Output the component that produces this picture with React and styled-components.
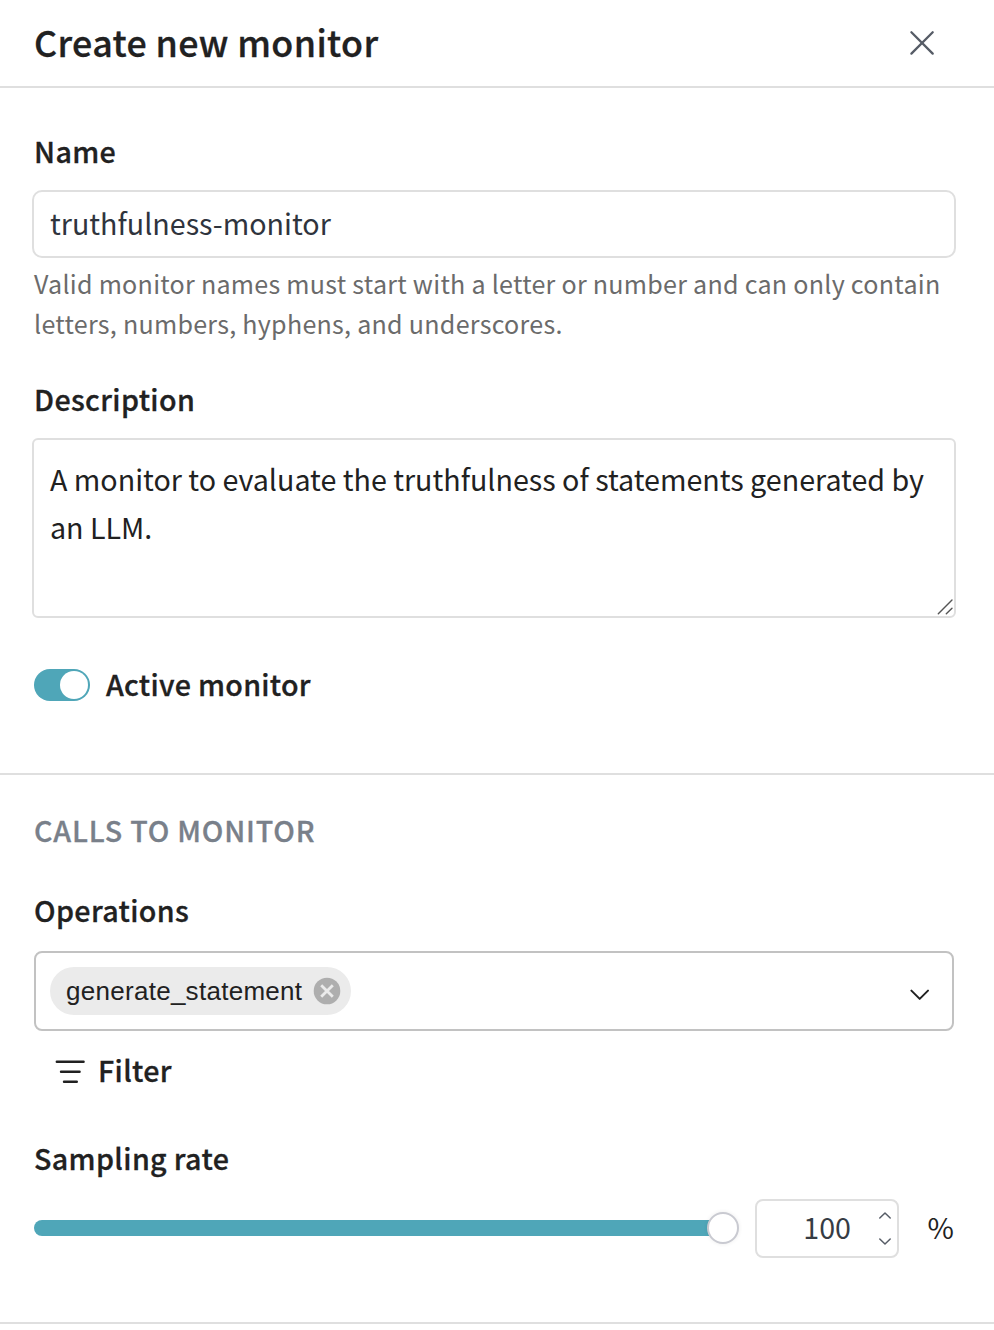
import React, { useState } from "react";
import styled, { createGlobalStyle, css } from "styled-components";

const color = {
  text: "#212121",
  input: "#2f343d",
  muted: "#6b6b6b",
  heading: "#79808a",
  icon: "#565c66",
  line: "#dfdfdf",
  accent: "#4fa6b8",
};

const Global = createGlobalStyle`
  *, *::before, *::after { box-sizing: border-box; }
  body { margin: 0; background: #fff; }
`;

const semibold = css`
  font-weight: 500;
  letter-spacing: 0.36px;
  -webkit-text-stroke: 0.3px currentColor;
  white-space: nowrap;
`;

const Panel = styled.main`
  width: 994px;
  height: 1330px;
  overflow: hidden;
  background: #fff;
  color: ${color.text};
  font-family: "Source Sans Pro", "Noto Sans CJK SC", sans-serif;
  font-size: 28.65px;
`;

const Header = styled.header`
  display: flex;
  align-items: center;
  justify-content: space-between;
  height: 88px;
  padding: 0 58px 0 34px;
  border-bottom: 2px solid ${color.line};
`;

const Title = styled.h1`
  ${semibold}
  margin: 0 0 4px;
  font-size: 35.8px;
  line-height: 48px;
`;

const CloseButton = styled.button`
  display: flex;
  padding: 0;
  border: 0;
  background: none;
  color: ${color.icon};
`;

const Section = styled.section`
  padding: ${(p) => p.$pad};
  border-bottom: 2px solid ${color.line};
`;

const Label = styled.label`
  ${semibold}
  display: block;
  height: 40px;
  margin-top: ${(p) => p.$top || 0}px;
  line-height: 38px;
`;

const ToggleLabel = styled(Label)`
  letter-spacing: 0.28px;
`;

const SectionHeading = styled.h2`
  height: 40px;
  margin: 0;
  color: ${color.heading};
  font-size: inherit;
  font-weight: 500;
  line-height: 38px;
  letter-spacing: 0.8px;
  -webkit-text-stroke: 0.3px currentColor;
`;

const TextInput = styled.input`
  display: block;
  width: 924px;
  height: 68px;
  margin: 18px 0 0 -2px;
  padding: 0 16px 4px;
  border: 2px solid ${color.line};
  border-radius: 10px;
  color: ${color.input};
  font: inherit;
  outline: 0;
`;

const Hint = styled.p`
  margin: 5px 0 37px;
  color: ${color.muted};
  font-size: 25.07px;
  line-height: 40px;
  letter-spacing: 0.265px;
`;

const TextAreaFrame = styled.div`
  position: relative;
  width: 924px;
  height: 180px;
  margin: 18px 0 0 -2px;
`;

const TextArea = styled.textarea`
  display: block;
  width: 100%;
  height: 100%;
  padding: 15px 16px;
  border: 2px solid ${color.line};
  border-radius: 6px;
  color: ${color.text};
  font: inherit;
  line-height: 48px;
  outline: 0;
  resize: none;
`;

const ResizeGrip = styled.svg`
  position: absolute;
  right: 2px;
  bottom: 2px;
`;

const ToggleRow = styled.div`
  display: flex;
  align-items: center;
  gap: 16px;
  margin-top: 47px;
`;

const Switch = styled.button`
  display: flex;
  align-items: center;
  justify-content: ${(p) => (p.$on ? "flex-end" : "flex-start")};
  width: 56px;
  height: 32px;
  padding: 0 2px;
  border: 0;
  border-radius: 16px;
  background: ${(p) => (p.$on ? color.accent : "#c4c7cc")};
`;

const SwitchKnob = styled.span`
  width: 28px;
  height: 28px;
  border-radius: 50%;
  background: #fff;
`;

const Select = styled.div`
  display: flex;
  align-items: center;
  justify-content: space-between;
  width: 920px;
  height: 80px;
  margin-top: 20px;
  padding: 0 21px 0 14px;
  border: 2px solid #c2c2c2;
  border-radius: 8px;
`;

const Chip = styled.span`
  display: flex;
  align-items: center;
  width: 301px;
  height: 48px;
  padding: 0 10px 0 16px;
  justify-content: space-between;
  border-radius: 24px;
  background: #ebebeb;
  font-family: "Liberation Sans", Arial, sans-serif;
  font-size: 26px;
  letter-spacing: 0.28px;
`;

const SelectArrow = styled.span`
  display: flex;
  margin-top: 4px;
`;

const FilterButton = styled.button`
  display: flex;
  align-items: center;
  gap: 13px;
  height: 40px;
  margin: 20px 0 0 21px;
  padding: 0;
  border: 0;
  background: none;
  color: ${color.text};
  font: inherit;
`;

const FilterText = styled.span`
  ${semibold}
  height: 40px;
  line-height: 38px;
`;

const RateRow = styled.div`
  display: flex;
  align-items: center;
  height: 59px;
  margin-top: 20px;
`;

const Slider = styled.div`
  display: flex;
  align-items: center;
  width: 705px;
  height: 32px;
  margin-bottom: 1px;
`;

const SliderFill = styled.div`
  flex: 1;
  height: 16px;
  margin-right: -8px;
  border-radius: 8px 0 0 8px;
  background: ${color.accent};
`;

const SliderThumb = styled.div`
  width: 32px;
  height: 32px;
  border: 2px solid #c9cad1;
  border-radius: 50%;
  background: #fff;
  box-shadow: 0 0 4px rgba(0, 0, 0, 0.08);
`;

const NumberBox = styled.div`
  display: flex;
  align-items: center;
  justify-content: flex-end;
  gap: 26.5px;
  width: 144px;
  height: 59px;
  margin-left: 16px;
  padding-right: 5.5px;
  border: 2px solid ${color.line};
  border-radius: 8px;
  color: #363c44;
`;

const RateText = styled.span`
  height: 40px;
  line-height: 35px;
`;

const Percent = styled(RateText)`
  margin-left: 28.5px;
`;

const Stepper = styled.div`
  display: flex;
  flex-direction: column;
  gap: 17px;
  color: #565c66;
`;

const strokeProps = {
  fill: "none",
  stroke: "currentColor",
  strokeLinecap: "round",
  strokeLinejoin: "round",
};

const CloseIcon = () => (
  <svg width="28" height="28" viewBox="0 0 28 28" strokeWidth="2.3" {...strokeProps}>
    <path d="M3.4 3.3l21.3 21.3M24.7 3.3L3.4 24.6" />
  </svg>
);

const ChipRemoveIcon = () => (
  <svg width="28" height="28" viewBox="0 0 28 28">
    <circle cx="14" cy="14" r="13.3" fill="#aeaeae" />
    <path d="M8.2 8.2l11.6 11.6M19.8 8.2L8.2 19.8" stroke="#ebebeb" strokeWidth="2.8" />
  </svg>
);

const ChevronIcon = () => (
  <svg width="22" height="14" viewBox="0 0 22 14" strokeWidth="2" {...strokeProps}>
    <path d="M2.4 4.6L10.7 12.9L19 4.6" />
  </svg>
);

const FilterIcon = () => (
  <svg width="30" height="26" viewBox="0 0 30 26" strokeWidth="2.4" {...strokeProps}>
    <path d="M1.8 3.7H28.6M6 13.8H24.6M9 23.8H21.8" />
  </svg>
);

const StepIcon = ({ d }) => (
  <svg width="14" height="9" viewBox="0 0 14 9" strokeWidth="1.5" {...strokeProps}>
    <path d={d} />
  </svg>
);

export default function App() {
  const [active, setActive] = useState(true);
  return (
    <Panel>
      <Global />
      <Header>
        <Title>Create new monitor</Title>
        <CloseButton aria-label="Close">
          <CloseIcon />
        </CloseButton>
      </Header>
      <Section $pad="44px 40px 68px 34px">
        <Label>Name</Label>
        <TextInput defaultValue="truthfulness-monitor" spellCheck={false} />
        <Hint>
          Valid monitor names must start with a letter or number and can only contain
          letters, numbers, hyphens, and underscores.
        </Hint>
        <Label>Description</Label>
        <TextAreaFrame>
          <TextArea
            spellCheck={false}
            defaultValue="A monitor to evaluate the truthfulness of statements generated by an LLM."
          />
          <ResizeGrip width="18" height="18" viewBox="0 0 18 18" strokeWidth="1.4" {...strokeProps}>
            <path d="M2.3 15.8L16 2M10.3 15.8L16 10.2" stroke="#555" />
          </ResizeGrip>
        </TextAreaFrame>
        <ToggleRow>
          <Switch $on={active} onClick={() => setActive(!active)} aria-label="Active monitor">
            <SwitchKnob />
          </Switch>
          <ToggleLabel>Active monitor</ToggleLabel>
        </ToggleRow>
      </Section>
      <Section $pad="36px 40px 64px 34px">
        <SectionHeading>CALLS TO MONITOR</SectionHeading>
        <Label $top={40}>Operations</Label>
        <Select>
          <Chip>
            generate_statement
            <ChipRemoveIcon />
          </Chip>
          <SelectArrow>
            <ChevronIcon />
          </SelectArrow>
        </Select>
        <FilterButton>
          <FilterIcon />
          <FilterText>Filter</FilterText>
        </FilterButton>
        <Label $top={48}>Sampling rate</Label>
        <RateRow>
          <Slider>
            <SliderFill />
            <SliderThumb />
          </Slider>
          <NumberBox>
            <RateText>100</RateText>
            <Stepper>
              <StepIcon d="M1.8 7L7 2L12.2 7" />
              <StepIcon d="M1.8 2L7 7L12.2 2" />
            </Stepper>
          </NumberBox>
          <Percent>%</Percent>
        </RateRow>
      </Section>
    </Panel>
  );
}
